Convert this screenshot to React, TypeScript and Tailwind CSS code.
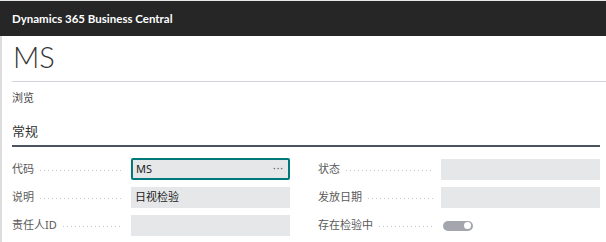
import React from "react";

const cjk = "font-['Segoe_UI','Noto_Sans','Noto_Sans_CJK_SC',sans-serif]";

type FieldRow = { label: string; value?: string; kind?: "text" | "lookup" | "toggle" };

const leftFields: FieldRow[] = [
  { label: "代码", value: "MS", kind: "lookup" },
  { label: "说明", value: "日视检验" },
  { label: "责任人ID", value: "" },
];

const rightFields: FieldRow[] = [
  { label: "状态", value: "" },
  { label: "发放日期", value: "" },
  { label: "存在检验中", kind: "toggle" },
];

const Leader: React.FC = () => (
  <div className="flex-1 mx-[6px] h-px mt-[2px] bg-[linear-gradient(to_right,#c8c8c8_1px,transparent_1px)] bg-[length:4px_1px] bg-repeat-x" />
);

const Field: React.FC<{ row: FieldRow; labelW: string }> = ({ row, labelW }) => (
  <div className="flex items-center h-[21px]">
    <div className={`flex items-center ${labelW} shrink-0 pr-[2px]`}>
      <span className="text-[11px] text-[#5a5a5a] whitespace-nowrap">{row.label}</span>
      <Leader />
    </div>
    {row.kind === "toggle" ? (
      <div className="w-[159px] flex items-center pl-[2px]">
        <div className="w-[30px] h-[10px] rounded-full bg-[#a3a6ad] flex items-center justify-end pr-[2px]">
          <div className="w-[7px] h-[7px] rounded-full bg-white" />
        </div>
      </div>
    ) : row.kind === "lookup" ? (
      <div className="w-[159px] h-[22px] -mt-px bg-[#e6e7e8] border-2 border-[#00797c] rounded-[2px] flex items-center justify-between pl-[3px] pr-[4px]">
        <span className="text-[11px] text-[#222]">{row.value}</span>
        <span className="text-[10px] text-[#555] tracking-[1px] leading-none -mt-[3px]">···</span>
      </div>
    ) : (
      <div className="w-[159px] h-[21px] bg-[#e6e7e8] flex items-center px-[4px]">
        <span className="text-[11px] text-[#222]">{row.value}</span>
      </div>
    )}
  </div>
);

export default function App() {
  return (
    <div className={`w-[606px] h-[242px] bg-white overflow-hidden border-t border-[#e6e6e6] ${cjk}`}>
      <div className="h-[35px] bg-[#262626] flex items-center px-[12px]">
        <span className="text-white text-[11.5px] font-bold font-['Lato',sans-serif]">Dynamics 365 Business Central</span>
      </div>
      <div className="border-l-2 border-[#dcdcdc] pl-[10px] h-full">
        <div className="pl-[1px] pt-[3px] h-[46px] border-b border-[#d4d3da]">
          <span className="text-[29px] font-light text-[#333] leading-[36px] font-['Lato',sans-serif]">MS</span>
        </div>
        <div className="pt-[9px] text-[11px] text-[#444] leading-[14px]">浏览</div>
        <div className="mt-[13px] mr-[6px] border-b-2 border-[#4b5361] pb-[3px]">
          <span className="text-[13px] text-[#333] leading-[16px]">常规</span>
        </div>
        <div className="flex gap-[28px] pt-[12px] mr-[6px]">
          <div className="flex flex-col gap-[7px]">
            {leftFields.map((r) => (
              <Field key={r.label} row={r} labelW="w-[119px]" />
            ))}
          </div>
          <div className="flex flex-col gap-[7px]">
            {rightFields.map((r) => (
              <Field key={r.label} row={r} labelW="w-[123px]" />
            ))}
          </div>
        </div>
      </div>
    </div>
  );
}
